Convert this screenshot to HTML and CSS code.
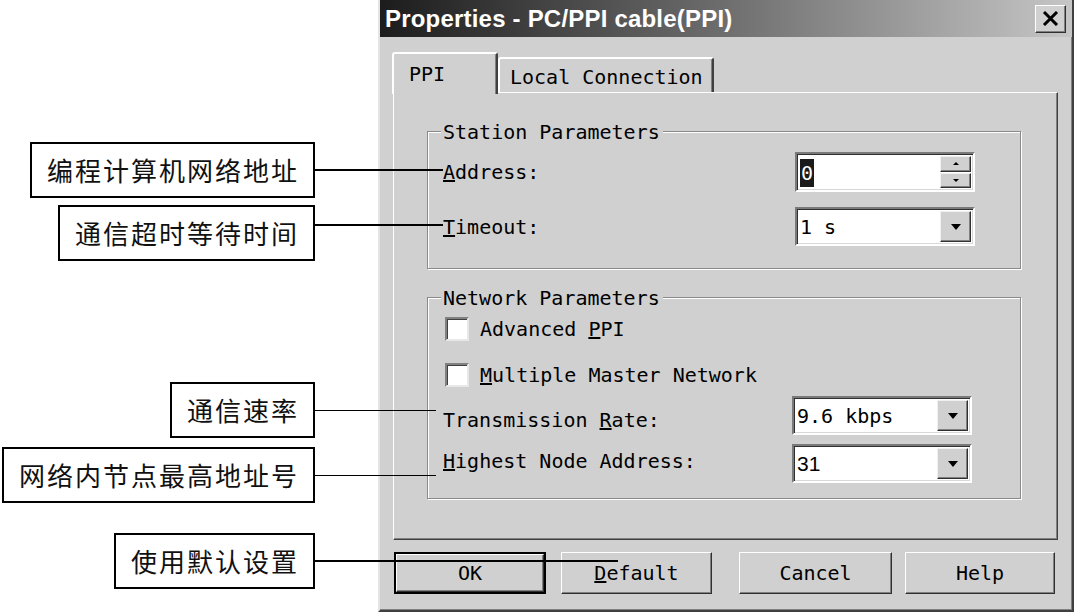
FILE: index.html
```html
<!DOCTYPE html>
<html>
<head>
<meta charset="utf-8">
<meta name="viewport" content="width=device-width, initial-scale=1.0">
<link rel="stylesheet" href="styles.css">
</head>
<body>

<div class="figure">

  <div class="window">
    <div class="titlebar">
      <span class="title">Properties - PC/PPI cable(PPI)</span>
      <span class="close">
        <svg width="17" height="15" viewBox="0 0 17 15"><path d="M2 1 L15 14 M15 1 L2 14" stroke="#000" stroke-width="3"/></svg>
      </span>
    </div>

    <div class="tabs">
      <div class="tab active">PPI</div>
      <div class="tab">Local Connection</div>
    </div>

    <div class="panel">
      <div class="group station">
        <div class="legend">Station Parameters</div>
        <div class="row first">
          <span><u>A</u>ddress:</span>
          <div class="field spin">
            <span class="value"><span class="sel">0</span></span>
            <div class="spinbtns">
              <span class="sbtn"><i class="up"></i></span>
              <span class="sbtn"><i class="down"></i></span>
            </div>
          </div>
        </div>
        <div class="row second">
          <span><u>T</u>imeout:</span>
          <div class="field combo">
            <span class="value">1 s</span>
            <span class="drop"><i class="down"></i></span>
          </div>
        </div>
      </div>

      <div class="group network">
        <div class="legend">Network Parameters</div>
        <div class="check first">
          <span class="box"></span>
          <span>Advanced <u>P</u>PI</span>
        </div>
        <div class="check second">
          <span class="box"></span>
          <span><u>M</u>ultiple Master Network</span>
        </div>
        <div class="row third">
          <span class="low">Transmission <u>R</u>ate:</span>
          <div class="field combo">
            <span class="value">9.6 kbps</span>
            <span class="drop"><i class="down"></i></span>
          </div>
        </div>
        <div class="row third">
          <span class="high"><u>H</u>ighest Node Address:</span>
          <div class="field combo">
            <span class="value sans">31</span>
            <span class="drop"><i class="down"></i></span>
          </div>
        </div>
      </div>
    </div>

    <div class="buttons">
      <div class="default-frame"><div class="btn">OK</div></div>
      <div class="btn"><u>D</u>efault</div>
      <div class="btn cancel">Cancel</div>
      <div class="btn help">Help</div>
    </div>
  </div>

  <!-- callouts -->
  <div class="callout c1"><div class="note">编程计算机网络地址</div><div class="lead"></div></div>
  <div class="callout c2"><div class="note">通信超时等待时间</div><div class="lead lead-top"></div></div>
  <div class="callout c3"><div class="note">通信速率</div><div class="lead thin"></div></div>
  <div class="callout c4"><div class="note">网络内节点最高地址号</div><div class="lead thin"></div></div>
  <div class="callout c5"><div class="note">使用默认设置</div><div class="lead"></div></div>

</div>

</body>
</html>
```

FILE: styles.css
```css
body {
  margin: 0;
  background: #fff;
  font-family: "DejaVu Sans Mono", "Liberation Mono", monospace;
  font-size: 20px;
  color: #000;
}

.figure {
  position: relative;
  width: 1076px;
  height: 614px;
  overflow: hidden;
}

/* dialog window */

.window {
  margin-left: 378px;
  width: 696px;
  height: 612px;
  box-sizing: border-box;
  background: #d0d0d0;
  border-left: 2px solid #e4e4e4;
  border-right: 2px solid #404040;
  border-bottom: 2px solid #404040;
  box-shadow: inset -1px -1px 0 #808080;
  display: flex;
  flex-direction: column;
}

.titlebar {
  height: 37px;
  background: linear-gradient(to right, #1c1c1c, #6e6e6e 50%, #c6c6c6);
  display: flex;
  align-items: center;
  justify-content: space-between;
  padding: 0 6px 0 5px;
}

.title {
  font-family: "Liberation Sans", Arial, sans-serif;
  font-weight: bold;
  font-size: 24px;
  color: #fff;
  letter-spacing: 0.2px;
}

.close {
  width: 31px;
  height: 28px;
  box-sizing: border-box;
  background: #d0d0d0;
  border: 1px solid;
  border-color: #fff #303030 #303030 #fff;
  box-shadow: inset -1px -1px 0 #808080;
  display: flex;
  align-items: center;
  justify-content: center;
}

/* tabs */

.tabs {
  margin-top: 15px;
  padding-left: 12px;
  display: flex;
  align-items: flex-end;
  height: 40px;
  position: relative;
  z-index: 1;
}

.tab {
  box-sizing: border-box;
  height: 35px;
  width: 216px;
  padding: 0 0 0 10px;
  line-height: 36px;
  border: 2px solid;
  border-bottom: 0;
  border-color: #fff #404040 transparent #fff;
  border-radius: 3px 3px 0 0;
  background: #d0d0d0;
  box-shadow: inset -1px 0 0 #808080;
}

.tab.active {
  width: 106px;
  height: 42px;
  margin-bottom: -2px;
  padding-left: 15px;
  line-height: 40px;
  border-right-color: #404040;
}

.panel {
  margin: 0 14px 0 13px;
  height: 448px;
  box-sizing: border-box;
  border: 1px solid;
  border-color: #fff #404040 #404040 #fff;
  box-shadow: inset -1px -1px 0 #808080;
  padding: 38px 36px 0 33px;
}

/* group boxes */

.group {
  border: 1px solid #8a8a8a;
  box-shadow: inset 1px 1px 0 #fff, 1px 1px 0 #fff;
  display: flex;
  flex-direction: column;
  padding-left: 15px;
}

.station {
  padding-right: 45px;
  padding-bottom: 22px;
}

.network {
  margin-top: 28px;
  padding-right: 48px;
  padding-bottom: 15px;
}

.legend {
  align-self: flex-start;
  height: 20px;
  line-height: 20px;
  margin: -10px 0 0 -2px;
  padding: 0 3px 0 2px;
  background: #d0d0d0;
}

.row {
  display: flex;
  align-items: center;
  justify-content: space-between;
}

.row .low { margin-top: 9px; }
.row .high { margin-top: -6px; }

.station .first { margin-top: 10px; }
.station .second { margin-top: 15px; }
.network .first { margin-top: 9px; }
.network .second { margin-top: 22px; }
.network .third { margin-top: 9px; }

.check {
  display: flex;
  align-items: center;
  gap: 11px;
  height: 24px;
  padding-left: 2px;
}

.check .box {
  width: 24px;
  height: 24px;
  box-sizing: border-box;
  background: #fff;
  border: 2px solid;
  border-color: #808080 #e8e8e8 #e8e8e8 #808080;
  box-shadow: inset 1px 1px 0 #404040;
}

/* fields */

.field {
  width: 180px;
  height: 40px;
  box-sizing: border-box;
  background: #fff;
  border: 2px solid;
  border-color: #7a7a7a #fff #fff #7a7a7a;
  box-shadow: inset 1px 1px 0 #303030, inset -1px -1px 0 #d8d8d8;
  display: flex;
  align-items: center;
  justify-content: space-between;
  padding: 2px 2px 2px 3px;
}

.combo { height: 39px; }

.value { padding-top: 1px; }

.value.sans {
  font-family: "Liberation Sans", Arial, sans-serif;
  font-size: 21px;
}

.sel {
  background: #1a1a1a;
  color: #fff;
  padding: 2px 1px;
}

.drop {
  width: 31px;
  height: 100%;
  box-sizing: border-box;
  background: #d0d0d0;
  border: 1px solid;
  border-color: #f0f0f0 #303030 #303030 #f0f0f0;
  box-shadow: inset -1px -1px 0 #808080;
  display: flex;
  align-items: center;
  justify-content: center;
}

.spinbtns {
  width: 31px;
  height: 100%;
  display: flex;
  flex-direction: column;
  gap: 1px;
}

.sbtn {
  flex: 1;
  background: #d0d0d0;
  border: 1px solid;
  border-color: #f0f0f0 #303030 #303030 #f0f0f0;
  box-shadow: inset -1px -1px 0 #808080;
  display: flex;
  align-items: center;
  justify-content: center;
}

i.down, i.up {
  width: 0;
  height: 0;
  border-left: 5px solid transparent;
  border-right: 5px solid transparent;
}

i.down { border-top: 6px solid #000; }

.sbtn i.down, .sbtn i.up {
  border-left-width: 3px;
  border-right-width: 3px;
}

.sbtn i.down { border-top-width: 3px; }
.sbtn i.up { border-bottom: 3px solid #000; }

/* buttons */

.buttons {
  display: flex;
  margin-top: 12px;
  padding-left: 14px;
  gap: 15px;
}

.btn {
  width: 151px;
  height: 42px;
  box-sizing: border-box;
  background: #d0d0d0;
  border: 1px solid;
  border-color: #fff #303030 #303030 #fff;
  box-shadow: inset -1px -1px 0 #808080;
  display: flex;
  align-items: center;
  justify-content: center;
}

.default-frame {
  border: 2px solid #000;
}

.default-frame .btn {
  width: 148px;
  height: 38px;
}

.btn.cancel { margin-left: 12px; width: 153px; }
.btn.help { margin-left: -2px; width: 150px; }

/* callouts */

.callout {
  position: absolute;
  left: 0;
  display: flex;
  align-items: center;
  justify-content: flex-end;
}

.note {
  height: 56px;
  box-sizing: border-box;
  border: 2px solid #000;
  background: #fff;
  padding: 0 14px 0 15px;
  line-height: 52px;
  font-family: "Noto Sans CJK SC", sans-serif;
  font-size: 26px;
  letter-spacing: 2px;
  color: #111;
}

.lead {
  flex: none;
  height: 2px;
  background: #000;
}

.lead.thin { height: 1px; }

.lead-top {
  align-self: flex-start;
  margin-top: 19px;
}

.c1 { top: 142px; width: 443px; }
.c1 .lead { width: 128px; }
.c2 { top: 205px; width: 443px; }
.c2 .lead { width: 128px; }
.c3 { top: 382px; width: 436px; }
.c3 .lead { width: 121px; }
.c4 { top: 447px; width: 436px; }
.c4 .lead { width: 121px; }
.c5 { top: 533px; width: 618px; }
.c5 .lead { width: 303px; }
```
